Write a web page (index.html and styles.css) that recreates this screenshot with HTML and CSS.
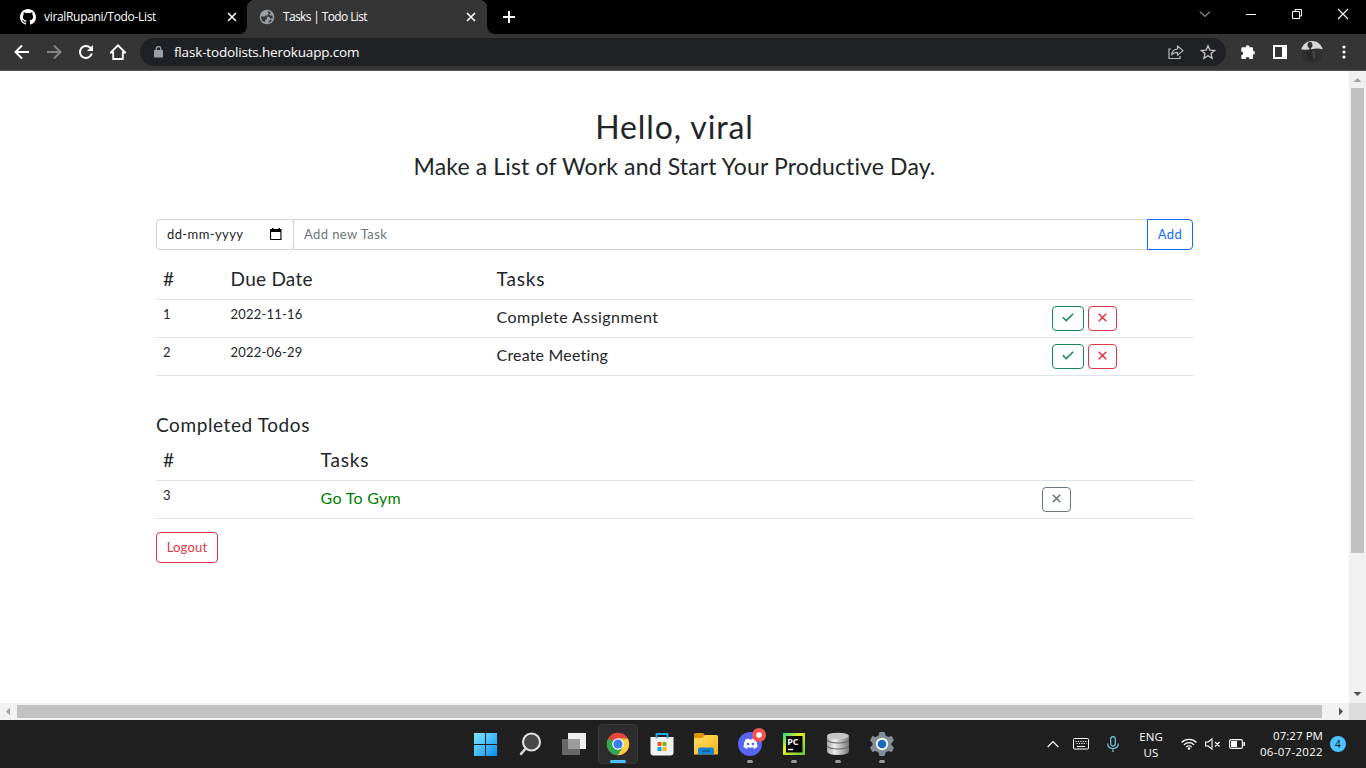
FILE: index.html
```html
<!DOCTYPE html>
<html lang="en">
<head>
<meta charset="utf-8">
<title>Tasks | Todo List</title>
<link rel="stylesheet" href="styles.css">
</head>
<body>
<header class="tabs">
  <div class="tab tab-idle">
    <svg width="16" height="16" viewBox="0 0 16 16"><path fill="#fff" d="M8 0C3.58 0 0 3.58 0 8c0 3.54 2.29 6.53 5.47 7.59.4.07.55-.17.55-.38 0-.19-.01-.82-.01-1.49-2.01.37-2.53-.49-2.69-.94-.09-.23-.48-.94-.82-1.13-.28-.15-.68-.52-.01-.53.63-.01 1.08.58 1.23.82.72 1.21 1.87.87 2.33.66.07-.52.28-.87.51-1.07-1.78-.2-3.64-.89-3.64-3.95 0-.87.31-1.59.82-2.15-.08-.2-.36-1.02.08-2.12 0 0 .67-.21 2.2.82a7.6 7.6 0 0 1 4 0c1.53-1.04 2.2-.82 2.2-.82.44 1.1.16 1.92.08 2.12.51.56.82 1.27.82 2.15 0 3.07-1.87 3.75-3.65 3.95.29.25.54.73.54 1.48 0 1.07-.01 1.93-.01 2.2 0 .21.15.46.55.38A8.01 8.01 0 0 0 16 8c0-4.42-3.58-8-8-8z"/></svg>
    <span class="tab-title title-a">viralRupani/Todo-List</span>
    <svg class="tab-x" width="10" height="10" viewBox="0 0 10 10"><path d="M1 1l8 8M9 1L1 9" stroke="#fff" stroke-width="1.6"/></svg>
  </div>
  <div class="tab tab-active">
    <svg width="16" height="16" viewBox="0 0 16 16"><circle cx="8" cy="8" r="7.3" fill="#9aa0a6"/><path fill="#353535" d="M2 7.500h4.200q1.800.2 1.800 2v1h-1.800v2.700Q2 12 2 7.500zM8.500 2.200q2 0 3.500 1.500l-1 1.300H8.800v1.500H6.200v1.300h4l1 1.800h2.600q0-1.500-.6-3h-1.500l-1.500-1.200zM9.200 13.700l2.300-.8 1.200-1.700-1.500-.7z"/></svg>
    <span class="tab-title title-b">Tasks | Todo List</span>
    <svg class="tab-x" width="10" height="10" viewBox="0 0 10 10"><path d="M1 1l8 8M9 1L1 9" stroke="#fff" stroke-width="1.6"/></svg>
  </div>
  <svg class="new-tab" width="12" height="12" viewBox="0 0 12 12"><path d="M6 0v12M0 6h12" stroke="#fff" stroke-width="2"/></svg>
  <div class="window-buttons">
    <svg width="12" height="12" viewBox="0 0 12 12"><path d="M1 3.500l5 5 5-5" fill="none" stroke="#eee"/></svg>
    <svg width="12" height="12" viewBox="0 0 12 12"><path d="M1 6.500h10" stroke="#fff"/></svg>
    <svg width="12" height="12" viewBox="0 0 12 12"><path d="M1.500 3.500h7v7h-7zM4 3V1.500h6.500V8H9" fill="none" stroke="#fff"/></svg>
    <svg width="12" height="12" viewBox="0 0 12 12"><path d="M1 1l10 10M11 1L1 11" stroke="#fff" stroke-width="1.100"/></svg>
  </div>
</header>
<nav class="toolbar">
  <div class="nav-icons">
    <svg width="16" height="16" viewBox="0 0 16 16"><path d="M15 8H2M8 1.500L1.500 8 8 14.500" fill="none" stroke="#fff" stroke-width="1.900"/></svg>
    <svg width="16" height="16" viewBox="0 0 16 16"><path d="M1 8h13M8 1.500L14.500 8 8 14.500" fill="none" stroke="#868686" stroke-width="1.900"/></svg>
    <svg width="16" height="16" viewBox="0 0 16 16"><path d="M13.800 9.500A6 6 0 1 1 12.400 3.900L14 5.500" fill="none" stroke="#fff" stroke-width="2"/><path d="M15 1v6H9z" fill="#fff"/></svg>
    <svg width="16" height="16" viewBox="0 0 16 16"><path d="M0.800 8.500L8 1.300l7.200 7.200h-2.400V15H3.200V8.500z" fill="none" stroke="#fff" stroke-width="1.800"/></svg>
  </div>
  <div class="address">
    <svg width="9" height="12" viewBox="0 0 9 12"><rect y="4" width="9" height="7.500" rx="1" fill="#9aa0a6"/><path d="M2.200 4.500V3a2.300 2.300 0 0 1 4.600 0v1.500" fill="none" stroke="#9aa0a6" stroke-width="1.300"/></svg>
    <span class="url">flask-todolists.herokuapp.com</span>
    <svg class="share" width="16" height="16" viewBox="0 0 16 16"><path d="M3 5H1v9.500h11V12" fill="none" stroke="#bbb" stroke-width="1.200"/><path d="M9.500 2v3C6 5.300 4 7.500 3.500 11c1.500-2 3.500-2.700 6-2.700v3L15 6.600z" fill="none" stroke="#bbb" stroke-width="1.200" stroke-linejoin="round"/></svg>
    <svg width="16" height="16" viewBox="0 0 16 16"><path d="M8 1.700l1.800 4.400 4.800.4-3.600 3.100 1.100 4.700L8 11.800l-4.100 2.500L5 9.600 1.400 6.500l4.800-.4z" fill="none" stroke="#c4c4c4" stroke-width="1.300"/></svg>
  </div>
  <div class="actions">
    <svg width="16" height="16" viewBox="0 0 16 16"><path d="M2.500 3.200h3.300a1.900 1.900 0 1 1 3.800 0H12q1 0 1 1v2.600a1.900 1.900 0 1 1 0 3.800V14q0 1-1 1H9.500a1.900 1.900 0 0 0-3.800 0H2.500q-1.200 0-1.200-1v-2.800a1.900 1.900 0 0 0 0-3.800V4.200q0-1 1.200-1z" fill="#fff"/></svg>
    <svg width="14" height="14" viewBox="0 0 14 14"><path fill="#fff" fill-rule="evenodd" d="M0 0h14v14H0zM2 2v10h7V2z"/></svg>
    <svg class="avatar" width="22" height="22" viewBox="0 0 22 22"><defs><clipPath id="face"><circle cx="11" cy="11" r="11"/></clipPath></defs><g clip-path="url(#face)"><path d="M0 0h22v22H0z" fill="#303030"/><path d="M0 0h22v8.500q-5-1.500-10-.5T0 8.500z" fill="#d6d6d6"/><ellipse cx="9" cy="4" rx="2.500" ry="3" fill="#333"/><path d="M8.500 6h1.500v3l3 1 2 9H6L5 11l3.500-2z" fill="#292929"/><path d="M11 10h3v8h-1.500z" fill="#484848"/></g></svg>
    <svg width="4" height="14" viewBox="0 0 4 14"><g fill="#fff"><circle cx="2" cy="2" r="1.600"/><circle cx="2" cy="7" r="1.600"/><circle cx="2" cy="12" r="1.600"/></g></svg>
  </div>
</nav>
<div class="viewport">
  <main class="page">
    <h1>Hello, viral</h1>
    <h2>Make a List of Work and Start Your Productive Day.</h2>
    <div class="form">
      <div class="date"><span>dd-mm-yyyy</span><svg width="12" height="12" viewBox="0 0 12 12"><path fill="#000" fill-rule="evenodd" d="M0 1h2V0h1.500v1h5V0H10v1h1.500v11H0zM1.100 4v6.900h9.300V4z"/></svg></div>
      <div class="task-input">Add new Task</div>
      <div class="add">Add</div>
    </div>
    <section class="table open">
      <div class="row head"><span>#</span><span class="due">Due Date</span><span>Tasks</span></div>
      <div class="row"><span>1</span><span class="day">2022-11-16</span><span class="task task-a">Complete Assignment</span><div class="buttons"><b class="check"><svg width="12" height="9" viewBox="0 0 12 9"><path d="M.8 4.200L4.200 7.600 11.200.8" fill="none" stroke="currentColor" stroke-width="1.500"/></svg></b><b class="cross"><svg width="9" height="9" viewBox="0 0 9 9"><path d="M.7.7l7.600 7.600M8.300.7L.7 8.300" stroke="currentColor" stroke-width="1.500"/></svg></b></div></div>
      <div class="row"><span>2</span><span class="day">2022-06-29</span><span class="task">Create Meeting</span><div class="buttons"><b class="check"><svg width="12" height="9" viewBox="0 0 12 9"><path d="M.8 4.200L4.200 7.600 11.200.8" fill="none" stroke="currentColor" stroke-width="1.500"/></svg></b><b class="cross"><svg width="9" height="9" viewBox="0 0 9 9"><path d="M.7.7l7.600 7.600M8.300.7L.7 8.300" stroke="currentColor" stroke-width="1.500"/></svg></b></div></div>
    </section>
    <h3>Completed Todos</h3>
    <section class="table done">
      <div class="row head"><span>#</span><span>Tasks</span></div>
      <div class="row"><span>3</span><span class="task finished">Go To Gym</span><div class="buttons"><b class="cross muted"><svg width="9" height="9" viewBox="0 0 9 9"><path d="M.7.7l7.600 7.600M8.300.7L.7 8.300" stroke="currentColor" stroke-width="1.500"/></svg></b></div></div>
    </section>
    <div class="logout">Logout</div>
  </main>
  <div class="vbar"><svg width="17" height="17" viewBox="0 0 17 17"><path d="M4.500 11h8l-4-4z" fill="#a3a3a3"/></svg><div class="vthumb"></div><svg class="end" width="17" height="17" viewBox="0 0 17 17"><path d="M4.500 6h8l-4 4z" fill="#505050"/></svg></div>
  <div class="hbar"><svg width="17" height="17" viewBox="0 0 17 17"><path d="M10 4.500v8l-4-4z" fill="#a3a3a3"/></svg><div class="hthumb"></div><svg class="hend" width="17" height="17" viewBox="0 0 17 17"><path d="M7 4.500v8l4-4z" fill="#505050"/></svg></div>
  <div class="corner"></div>
</div>
<footer class="taskbar">
  <div class="apps">
    <div class="app"><svg width="24" height="24" viewBox="0 0 24 24"><defs><linearGradient id="win" x2="1" y2="1"><stop stop-color="#7deaff"/><stop offset="1" stop-color="#0a8ef0"/></linearGradient></defs><path fill="url(#win)" d="M0 1h11v11H0zM12 1h11v11H12zM0 13h11v11H0zM12 13h11v11H12z"/></svg></div>
    <div class="app"><svg width="24" height="24" viewBox="0 0 24 24"><circle cx="13.500" cy="10" r="8.500" fill="#484848" stroke="#e2e4e6" stroke-width="2"/><path d="M7.700 16.500L3 21.800" stroke="#d5d7d9" stroke-width="2.600" stroke-linecap="round"/></svg></div>
    <div class="app"><svg width="24" height="24" viewBox="0 0 24 24"><path d="M6 1h18v16H6z" fill="#eee"/><path d="M0 7h18v16H0z" fill="#686868"/><path d="M6 7h12v10H6z" fill="#9b9b9b"/></svg></div>
    <div class="app current"><svg width="24" height="24" viewBox="0 0 24 24"><circle cx="12" cy="12" r="11.200" fill="#e8453c"/><path d="M12 12L2.300 6.400A11.200 11.200 0 0 0 12 23.200l5-8.500z" fill="#34a853"/><path d="M12 6.500h9.700A11.200 11.200 0 0 1 12 23.200l5-8.500z" fill="#fdd043"/><circle cx="12" cy="12" r="5.800" fill="#fff"/><circle cx="12" cy="12" r="4.600" fill="#397fed"/></svg><i></i></div>
    <div class="app"><svg width="24" height="24" viewBox="0 0 24 24"><path d="M.5 5h23v15.500q0 3-3 3h-17q-3 0-3-3z" fill="#f2f2f2"/><path d="M6.500 6.500V2h11v4.500" fill="none" stroke="#28a9ea" stroke-width="1.800"/><path d="M7.500 10h4v4h-4z" fill="#f25022"/><path d="M12.500 10h4v4h-4z" fill="#7fba00"/><path d="M7.500 15h4v4h-4z" fill="#00a4ef"/><path d="M12.500 15h4v4h-4z" fill="#ffb900"/></svg></div>
    <div class="app"><svg width="24" height="24" viewBox="0 0 24 24"><defs><linearGradient id="folder" x2="1" y2="1"><stop stop-color="#ffdc67"/><stop offset="1" stop-color="#fdb813"/></linearGradient></defs><path d="M0 2.500Q0 1 1.500 1H9l2 2-2 3H0z" fill="#d99400"/><path d="M0 6h8l3-3h11.500Q24 3 24 4.500v18H0z" fill="url(#folder)"/><path d="M4 22.500v-5q0-2 2-2h12q2 0 2 2v5z" fill="#1682d4"/><path d="M8 19h8" stroke="#075b9c" stroke-width="1.500"/></svg></div>
    <div class="app"><svg class="chat" width="30" height="30" viewBox="0 0 30 30"><circle cx="14" cy="16" r="12" fill="#5865f2"/><path d="M9.500 11.500l3-1 .7 1h2.600l.7-1 3 1q2 3.500 2 7.500l-3.500 2-1-1.700q-2.500.7-5 0L11 21l-3.500-2q0-4 2-7.500z" fill="#fff"/><circle cx="12" cy="16" r="1.300" fill="#5865f2"/><circle cx="17" cy="16" r="1.300" fill="#5865f2"/><circle cx="23" cy="7" r="7" fill="#f05655"/><circle cx="23" cy="7" r="2.800" fill="#fff"/></svg><i></i></div>
    <div class="app"><svg width="24" height="24" viewBox="0 0 24 24"><defs><linearGradient id="pc" x2="1" y2="1"><stop stop-color="#21d789"/><stop offset=".4" stop-color="#e6ed28"/><stop offset="1" stop-color="#63ce3d"/></linearGradient></defs><path d="M1 1h22v22H1z" fill="url(#pc)"/><path d="M4 4h16.500v16.500H4z" fill="#050505"/><path d="M6 17.500h5" stroke="#fff" stroke-width="1.400"/><text x="5.200" y="12.500" fill="#fff" font-family="Open Sans, sans-serif" font-size="9" font-weight="700">PC</text></svg><i></i></div>
    <div class="app"><svg width="24" height="24" viewBox="0 0 24 24"><defs><linearGradient id="db"><stop stop-color="#aaa"/><stop offset=".35" stop-color="#eee"/><stop offset="1" stop-color="#777"/></linearGradient></defs><path d="M1 4q0-3 11-3t11 3v15q0 4-11 4T1 19z" fill="url(#db)"/><ellipse cx="12" cy="4" rx="10.800" ry="3.200" fill="#c5c5c5"/><path d="M1 8q2 3 11 3t11-3M1 14q2 3 11 3t11-3" fill="none" stroke="#666" stroke-width="1.200"/></svg><i></i></div>
    <div class="app"><svg width="24" height="24" viewBox="0 0 24 24"><path fill="#858e96" d="M9.500 0h5l1 3.500 2.700 1.500 3.500-1L24 8.300 21.500 11v2L24 15.700 21.700 20l-3.500-1-2.700 1.500-1 3.500h-5l-1-3.500L5.800 19l-3.500 1L0 15.700 2.500 13v-2L0 8.300 2.300 4l3.500 1 2.700-1.500z"/><circle cx="12" cy="12" r="6.200" fill="#f5f5f5"/><circle cx="12" cy="12" r="4.300" fill="#1769b9"/></svg><i></i></div>
  </div>
  <div class="tray">
    <svg width="12" height="8" viewBox="0 0 12 8"><path d="M.7 7L6 1.500 11.300 7" fill="none" stroke="#fff" stroke-width="1.200"/></svg>
    <svg class="keyboard" width="16" height="12" viewBox="0 0 16 12"><rect x=".5" y=".5" width="15" height="10.500" rx="1" fill="none" stroke="#fff"/><path d="M2.500 3.500h11M3.500 5.500h10" stroke="#fff" stroke-dasharray="1.200 1.200"/><path d="M4 8.500h8" stroke="#fff"/></svg>
    <svg class="mic" width="12" height="16" viewBox="0 0 12 16"><rect x="3.700" y=".6" width="4.600" height="9.500" rx="2.300" fill="none" stroke="#76c7dc" stroke-width="1.200"/><path d="M.7 7.500q0 5 5.300 5t5.300-5M6 12.500V16" fill="none" stroke="#76c7dc" stroke-width="1.200"/></svg>
    <div class="lang">ENG<br>US</div>
    <svg class="wifi" width="16" height="12" viewBox="0 0 16 12"><path d="M.6 4.500a10.500 10.500 0 0 1 14.800 0M2.900 6.800a7.200 7.200 0 0 1 10.200 0M5.200 9.100a4 4 0 0 1 5.600 0" fill="none" stroke="#fff" stroke-width="1.200"/><circle cx="8" cy="10.500" r="1.300" fill="#fff"/></svg>
    <svg class="sound" width="16" height="12" viewBox="0 0 16 12"><path d="M.6 4h2.600L7 .8v10.400L3.200 8H.6zM10 4l4.500 4.500M14.500 4L10 8.500" fill="none" stroke="#fff" stroke-width="1.100"/></svg>
    <svg class="battery" width="16" height="12" viewBox="0 0 16 12"><rect x=".6" y="1.600" width="12.800" height="8.800" rx="1.500" fill="none" stroke="#fff" stroke-width="1.100"/><path d="M2 3h6v6H2z" fill="#fff"/><path d="M15.200 4v4" stroke="#fff" stroke-width="1.500"/></svg>
    <div class="clock"><span>07:27 PM</span><br>06-07-2022</div>
    <div class="count">4</div>
  </div>
</footer>
</body>
</html>
```

FILE: styles.css
```css
* { box-sizing: border-box; }
body { margin: 0; width: 1366px; height: 768px; overflow: hidden; background: #fff; font-family: "Open Sans", "Noto Sans", sans-serif; }
svg { display: block; flex: none; }
.tabs { height: 34px; background: linear-gradient(90deg, #000 0 240px, #353535 240px 494px, #000 494px); display: flex; align-items: center; color: #fff; font-size: 12px; }
.tab { height: 34px; display: flex; align-items: center; }
.tab-idle { width: 247px; padding: 0 10px 0 20px; border-radius: 0 0 8px 0; background: #000; }
.tab-active { width: 240px; padding: 0 11px 0 12px; background: radial-gradient(circle at 8px 8px, #353535 8px, #000 8.5px) 0 0 / 8px 8px no-repeat, radial-gradient(circle at 0 8px, #353535 8px, #000 8.5px) 100% 0 / 8px 8px no-repeat, #353535; }
.tab-title { margin-left: 8px; white-space: nowrap; line-height: 34px; }
.title-a { letter-spacing: -.32px; }
.title-b { letter-spacing: -.63px; }
.tab-x { margin-left: auto; }
.new-tab { box-sizing: content-box; padding: 11px 0 11px 16px; border-radius: 0 0 0 8px; background: #000; }
.window-buttons { margin-left: auto; margin-right: 17px; display: flex; gap: 34px; position: relative; top: -3px; }
.toolbar { height: 37px; background: #353535; border-bottom: 1px solid #555; display: flex; align-items: center; }
.nav-icons { display: flex; gap: 16px; padding-left: 14px; width: 140px; }
.address { width: 1086px; height: 28px; border-radius: 14px; background: #202124; display: flex; align-items: center; padding: 0 10px 0 14px; }
.url { margin-left: 11px; color: #fff; font-size: 13.5px; letter-spacing: -.17px; line-height: 28px; }
.share { margin-left: auto; margin-right: 16px; }
.actions { display: flex; align-items: center; gap: 17px; margin-left: 14px; }
.avatar { margin: 0 2px 0 -3px; }
.viewport { height: 649px; display: grid; grid-template: 632px 17px / 1349px 17px; }
.page { padding: 34px 156px 0; background: #fff; color: #212529; font-family: Lato, "Open Sans", sans-serif; font-size: 13px; letter-spacing: .2px; }
h1, h2, h3 { margin: 0; font-weight: 400; white-space: nowrap; }
h1 { height: 43px; line-height: 43px; text-align: center; font-size: 32px; letter-spacing: .9px; }
h2 { height: 36px; line-height: 36px; text-align: center; font-size: 23px; letter-spacing: .14px; }
.form { margin-top: 35px; height: 31px; display: flex; line-height: 28px; letter-spacing: .4px; }
.date { width: 138px; border: 1px solid #ced4da; border-radius: 4px; display: flex; justify-content: space-between; align-items: center; padding: 0 11px 1px 10px; }
.date span { height: 28px; line-height: 28px; }
.task-input { width: 854px; margin-left: -1px; border: 1px solid #ced4da; border-right: 0; padding-left: 10px; color: #6c757d; }
.add { width: 46px; border: 1px solid #0d6efd; border-radius: 0 4px 4px 0; color: #0d6efd; text-align: center; }
.table { margin-top: 11px; }
.row { height: 38px; border-bottom: 1px solid #dee2e6; display: grid; padding-left: 7px; line-height: 28px; }
.row > span { white-space: nowrap; }
.open .row { grid-template-columns: 67.6px 266px 555.4px 1fr; }
.done .row { grid-template-columns: 157.6px 721.4px 1fr; }
.row.head { height: 39px; line-height: 36px; font-size: 19px; letter-spacing: .8px; }
.row .due { letter-spacing: .25px; }
.row .task { font-size: 16px; line-height: 34px; letter-spacing: .18px; }
.row .task-a { letter-spacing: .43px; }
.row .finished { color: green; letter-spacing: .3px; }
.buttons { display: flex; gap: 4px; padding-top: 6px; }
.check, .cross { height: 25px; border: 1px solid; border-radius: 4px; display: flex; justify-content: center; padding-top: 6px; }
.check { width: 32px; color: #198754; padding-left: 1px; }
.cross { width: 29px; color: #dc3545; }
.muted { color: #6c757d; }
h3 { margin-top: 35px; height: 31px; line-height: 28px; font-size: 19px; letter-spacing: .6px; }
.done { margin-top: 0; }
.logout { margin-top: 13px; width: 62px; height: 31px; border: 1px solid #dc3545; border-radius: 4px; color: #dc3545; line-height: 28px; text-align: center; }
.vbar { background: #f1f1f1; display: flex; flex-direction: column; align-items: center; }
.vthumb { width: 13px; height: 465px; background: #c1c1c1; }
.end { margin-top: auto; }
.hbar { background: #f1f1f1; display: flex; align-items: center; }
.hthumb { width: 1305px; height: 13px; background: #c1c1c1; }
.hend { margin-left: auto; }
.corner { background: #dcdcdc; }
.taskbar { height: 48px; background: #202020; display: flex; color: #fff; }
.apps { display: flex; margin-left: 464px; }
.app { width: 44px; height: 48px; display: grid; place-items: center; position: relative; }
.app i { position: absolute; left: 19px; bottom: 5px; width: 6px; height: 3px; border-radius: 2px; background: #999; }
.chat { margin-left: 2px; margin-bottom: 2px; }
.current::before { content: ""; position: absolute; inset: 4px 2px; border: 1px solid #383838; border-radius: 4px; background: #2d2d2d; }
.current svg { position: relative; }
.current i { width: 16px; left: 14px; background: #4cc2ff; }
.tray { margin-left: 143px; display: flex; align-items: center; font-size: 11.5px; line-height: 16px; letter-spacing: .3px; }
.keyboard { margin-left: 14px; }
.mic { margin-left: 18px; }
.lang { width: 30px; margin-left: 17px; padding-top: 1px; text-align: center; letter-spacing: .1px; }
.wifi { margin-left: 15px; }
.sound { margin-left: 8px; }
.battery { margin-left: 8px; }
.clock { width: 70px; margin-left: 8px; text-align: right; white-space: nowrap; }
.clock span { letter-spacing: .05px; }
.count { width: 16px; height: 16px; margin-left: 7px; border-radius: 50%; background: #4cc2ff; color: #111; font-size: 10px; text-align: center; }
```
